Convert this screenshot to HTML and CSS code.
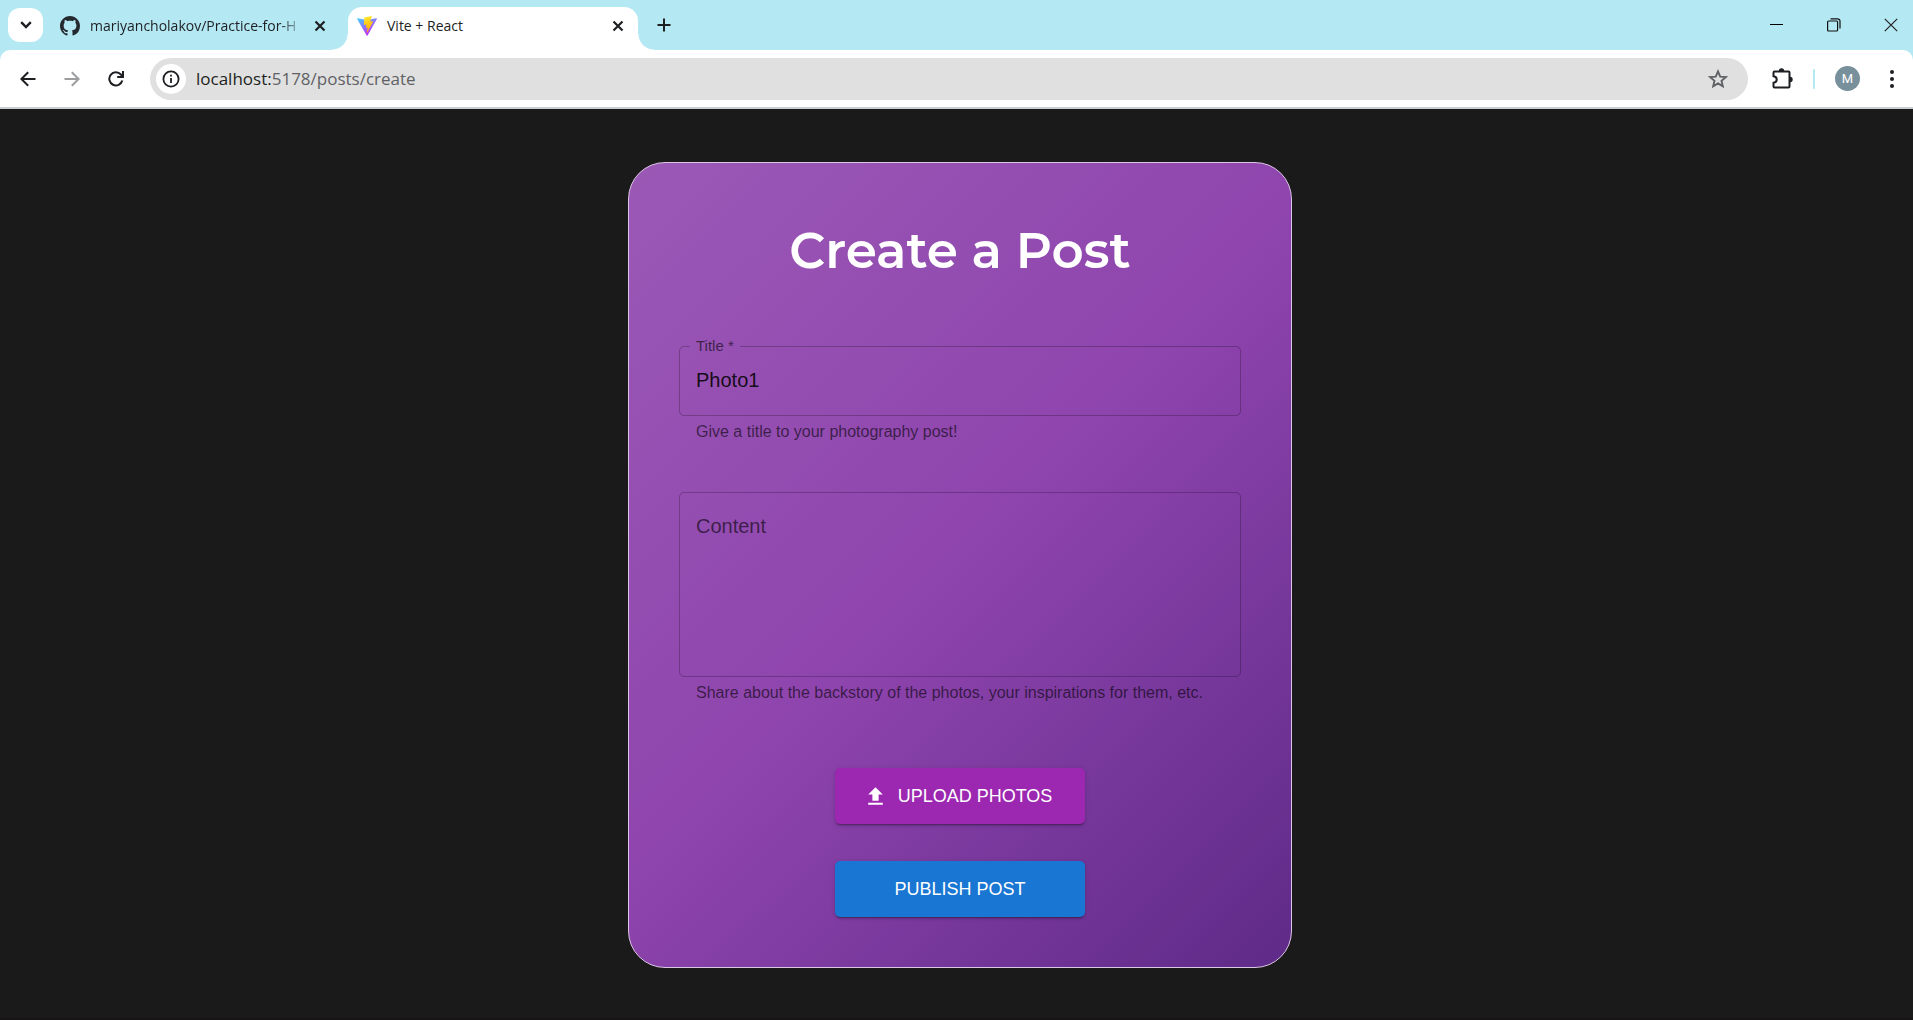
FILE: index.html
```html
<!DOCTYPE html>
<html lang="en">
<head>
  <meta charset="utf-8">
  <title>Vite + React</title>
  <link rel="stylesheet" href="styles.css">
</head>
<body>
  <header class="browser">
    <div class="tabstrip">
      <button class="tab-search" aria-label="Search tabs">
        <svg width="12" height="12" viewBox="0 0 12 12" fill="none" stroke="#1d1f22" stroke-width="2.4"><path d="M1.2 3.2 6 8l4.800-4.800"/></svg>
      </button>
      <div class="tab">
        <svg class="favicon" viewBox="0 0 16 16" fill="#24292f"><path d="M8 0C3.580 0 0 3.580 0 8c0 3.540 2.290 6.530 5.470 7.590.4.070.550-.170.550-.380 0-.190-.010-.820-.010-1.490-2.010.370-2.530-.490-2.690-.940-.090-.230-.480-.940-.820-1.130-.280-.150-.680-.520-.010-.530.630-.010 1.080.580 1.230.820.720 1.210 1.870.870 2.330.660.070-.520.280-.870.510-1.070-1.780-.200-3.640-.890-3.640-3.950 0-.870.310-1.590.820-2.150-.080-.200-.360-1.020.080-2.120 0 0 .670-.210 2.200.820.640-.180 1.320-.270 2-.270s1.360.090 2 .270c1.530-1.040 2.200-.820 2.200-.820.440 1.100.160 1.920.080 2.120.510.560.820 1.270.820 2.150 0 3.070-1.870 3.750-3.650 3.950.290.250.540.730.540 1.480 0 1.070-.010 1.930-.010 2.200 0 .210.150.460.550.380A8.010 8.010 0 0 0 16 8c0-4.420-3.580-8-8-8z"/></svg>
        <span class="tab-title faded">mariyancholakov/Practice-for-H</span>
        <button class="icon" aria-label="Close tab">
          <svg width="12" height="12" viewBox="0 0 12 12" stroke="#1d1f22" stroke-width="2.2"><path d="M1.500 1.500l9 9M10.500 1.500l-9 9"/></svg>
        </button>
      </div>
      <div class="tab active">
        <svg class="favicon" viewBox="0 0 32 32">
          <defs>
            <linearGradient id="vite-blue" x1="0" y1="0" x2=".6" y2="1"><stop offset="0" stop-color="#41d1ff"/><stop offset=".9" stop-color="#bd34fe"/></linearGradient>
            <linearGradient id="vite-bolt" x1=".4" y1="0" x2=".6" y2="1"><stop offset="0" stop-color="#ffea2e"/><stop offset="1" stop-color="#ff9f00"/></linearGradient>
          </defs>
          <path fill="url(#vite-blue)" d="M31.800 4.700 16.900 31.200c-.3.600-1.200.6-1.500 0L.2 4.700c-.3-.6.200-1.300.9-1.200l15 2.700 14.800-2.700c.7-.1 1.200.6.9 1.200z"/>
          <path fill="url(#vite-bolt)" d="M23 .1 12 2.200c-.2 0-.3.200-.4.400l-.6 11.300c0 .3.200.5.500.5l3-.7c.3-.1.600.2.500.5l-.9 4.400c-.1.300.2.600.5.500l1.900-.6c.3-.1.600.2.500.5l-1.400 7c-.1.400.5.700.7.300L25.800 9c.2-.3-.1-.7-.5-.6l-3.200.6c-.3.100-.6-.2-.5-.5L23.500.6c.1-.3-.2-.6-.5-.5z"/>
        </svg>
        <span class="tab-title">Vite + React</span>
        <button class="icon" aria-label="Close tab">
          <svg width="12" height="12" viewBox="0 0 12 12" stroke="#1d1f22" stroke-width="2.2"><path d="M1.500 1.500l9 9M10.500 1.500l-9 9"/></svg>
        </button>
      </div>
      <button class="icon new-tab" aria-label="New tab">
        <svg width="14" height="14" viewBox="0 0 14 14" stroke="#1d1f22" stroke-width="2"><path d="M7 .5v13M.5 7h13"/></svg>
      </button>
      <div class="window-controls">
        <button class="icon" aria-label="Minimize">
          <svg width="14" height="14" viewBox="0 0 14 14" stroke="#000" shape-rendering="crispEdges"><path d="M0 6.500h13"/></svg>
        </button>
        <button class="icon" aria-label="Restore">
          <svg width="14" height="14" viewBox="0 0 14 14" fill="none" stroke="#111" stroke-width="1.2"><rect x=".6" y="3" width="10" height="10" rx="1"/><path d="M3.500 .8h7a2.500 2.500 0 0 1 2.500 2.500v7.200"/></svg>
        </button>
        <button class="icon" aria-label="Close">
          <svg width="14" height="14" viewBox="0 0 14 14" stroke="#222" stroke-width="1.200"><path d="M.8.8l12.400 12.400M13.200.8.8 13.200"/></svg>
        </button>
      </div>
    </div>

    <div class="toolbar">
      <div class="navigation">
        <button class="icon" aria-label="Back">
          <svg width="16" height="16" viewBox="0 0 16 16" fill="none" stroke="#1d1f22" stroke-width="2"><path d="M15.500 8H1.800M8.200 1.200 1.400 8l6.800 6.800"/></svg>
        </button>
        <button class="icon" aria-label="Forward">
          <svg width="16" height="16" viewBox="0 0 16 16" fill="none" stroke="#9b9d9f" stroke-width="2"><path d="M.5 8h13.700M7.800 1.200 14.600 8l-6.800 6.800"/></svg>
        </button>
        <button class="icon" aria-label="Reload">
          <svg width="16" height="16" viewBox="0 0 16 16" fill="none" stroke="#1d1f22" stroke-width="2"><path d="M14.300 9.500A6.600 6.600 0 1 1 12.900 3.500l1.600 1.700"/><path d="M15 0v6H9.200"/></svg>
        </button>
      </div>
      <div class="address">
        <button class="site-info" aria-label="Site information">
          <svg width="18" height="18" viewBox="0 0 18 18" fill="none" stroke="#1d1f22"><circle cx="9" cy="9" r="7.600" stroke-width="1.800"/><path d="M9 8v5M9 4.800v1.800" stroke-width="1.800"/></svg>
        </button>
        <span class="url">localhost:<span class="path">5178/posts/create</span></span>
        <button class="icon" aria-label="Bookmark this page">
          <svg width="20" height="20" viewBox="0 0 20 20" fill="none" stroke="#5f6164" stroke-width="1.900"><path d="M10 2.400l2.200 5.200 5.600.5-4.300 3.700 1.300 5.500L10 14.400l-4.800 2.900 1.300-5.500L2.200 8.100l5.600-.5z"/></svg>
        </button>
      </div>
      <button class="icon" aria-label="Extensions">
        <svg width="22" height="22" viewBox="0 0 22 22" fill="none" stroke="#1d1f22" stroke-width="2"><path d="M3.500 3.500h14a1 1 0 0 1 1 1v14a1 1 0 0 1-1 1h-14a1 1 0 0 1-1-1v-3.700c4.300-.5 4.300-6.100 0-6.600V4.500a1 1 0 0 1 1-1z"/><path d="M7.800 3a2.700 2.700 0 0 1 5.400 0zM19 8.800a2.700 2.700 0 0 1 0 5.400z" fill="#1d1f22" stroke="none"/></svg>
      </button>
      <span class="divider"></span>
      <button class="avatar" aria-label="Profile">M</button>
      <button class="icon" aria-label="Menu">
        <svg width="6" height="20" viewBox="0 0 6 20" fill="#1d1f22"><circle cx="3" cy="3" r="2"/><circle cx="3" cy="10" r="2"/><circle cx="3" cy="17" r="2"/></svg>
      </button>
    </div>
  </header>

  <main class="page">
    <form class="card">
      <h1 class="heading">Create a Post</h1>

      <fieldset class="outline">
        <legend class="notch"><label for="title">Title *</label></legend>
        <input class="control" id="title" type="text" value="Photo1" aria-describedby="title-help">
      </fieldset>
      <p class="helper" id="title-help">Give a title to your photography post!</p>

      <div class="outline content">
        <label class="resting-label" for="content">Content</label>
        <textarea class="control" id="content" aria-describedby="content-help"></textarea>
      </div>
      <p class="helper" id="content-help">Share about the backstory of the photos, your inspirations for them, etc.</p>

      <div class="actions">
        <button class="button upload" type="button">
          <svg width="25" height="25" viewBox="0 0 24 24" fill="#fff"><path d="M5 20h14v-2H5zM5 10h4v6h6v-6h4l-7-7z"/></svg>
          Upload photos
        </button>
        <button class="button publish" type="submit">Publish post</button>
      </div>
    </form>
  </main>
</body>
</html>
```
FILE: styles.css
```css
* {
  box-sizing: border-box;
}

body {
  margin: 0;
  min-height: 100vh;
  display: flex;
  flex-direction: column;
  background: #1a1a1a;
  font-family: "Liberation Sans", Arial, sans-serif;
}

button {
  border: 0;
  padding: 0;
  background: none;
  font-family: inherit;
}

svg {
  display: block;
}

/* Browser frame */

.browser {
  background: #b4e8f3;
  border-bottom: 2px solid #c9cfd0;
  font-family: "Open Sans", "Noto Sans", sans-serif;
  color: #1d1f22;
}

.tabstrip {
  height: 50px;
  padding-left: 8px;
  display: flex;
  align-items: center;
}

.icon {
  flex: none;
  display: grid;
  place-items: center;
}

.tab-search {
  width: 35px;
  height: 34px;
  border-radius: 12px;
  background: #fff;
  display: grid;
  place-items: center;
}

.tab {
  width: 305px;
  height: 43px;
  padding: 0 22px 6px 17px;
  display: flex;
  align-items: center;
  gap: 10px;
  align-self: flex-end;
}

.tab.active {
  position: relative;
  width: 290px;
  padding-left: 9px;
  padding-right: 14px;
  border-radius: 14px 14px 0 0;
  background: #fff;
}

.tab.active::before,
.tab.active::after {
  content: "";
  position: absolute;
  bottom: 0;
  width: 16px;
  height: 16px;
}

.tab.active::before {
  right: 100%;
  background: radial-gradient(circle at 0 0, transparent 15px, #fff 16px);
}

.tab.active::after {
  left: 100%;
  background: radial-gradient(circle at 100% 0, transparent 15px, #fff 16px);
}

.favicon {
  flex: none;
  width: 20px;
  height: 20px;
}

.tab-title {
  flex: 1;
  white-space: nowrap;
  font-size: 14px;
  line-height: 20px;
}

.faded {
  -webkit-mask-image: linear-gradient(to left, transparent, #000 24px);
  mask-image: linear-gradient(to left, transparent, #000 24px);
}

.new-tab {
  margin-left: 19px;
}

.window-controls {
  margin-left: auto;
  padding-right: 15px;
  display: flex;
  gap: 43px;
}

.toolbar {
  height: 57px;
  padding: 0 18px 0 20px;
  display: flex;
  align-items: center;
  border-radius: 10px 10px 0 0;
  background: #fff;
}

.navigation {
  display: flex;
  gap: 28px;
  margin-right: 26px;
}

.address {
  flex: 1;
  height: 42px;
  margin-right: 23px;
  padding: 0 20px 0 6px;
  display: flex;
  align-items: center;
  border-radius: 21px;
  background: #e0e0e0;
}

.site-info {
  width: 30px;
  height: 30px;
  border-radius: 50%;
  background: #fff;
  display: grid;
  place-items: center;
}

.url {
  flex: 1;
  padding-left: 10px;
  font-size: 17px;
  line-height: 24px;
}

.path {
  color: #5f6164;
}

.divider {
  width: 2px;
  height: 20px;
  margin: 0 20px;
  border-radius: 1px;
  background: #b4e8f3;
}

.avatar {
  width: 25px;
  height: 25px;
  margin-right: 29px;
  border-radius: 50%;
  background: #78909c;
  color: #fff;
  font-family: Roboto, sans-serif;
  font-size: 13px;
  line-height: 25px;
}

/* Page */

.page {
  flex: 1;
  padding: 53px 0 50px 7px;
  border-bottom: 2px solid #161414;
}

.card {
  max-width: 664px;
  margin: 0 auto;
  padding: 50px;
  border: 1px solid #dcc6e6;
  border-radius: 37px;
  background: linear-gradient(135deg, #9b59b6, #8e44ad, #5e2a88) border-box;
}

.heading {
  margin: 0 0 48px;
  color: #fff;
  font-family: Montserrat, Inter, sans-serif;
  font-size: 50px;
  font-weight: 600;
  line-height: 76px;
  text-align: center;
}

.outline {
  min-width: 0;
  margin: 0;
  padding: 0 10px;
  border: 1px solid rgba(0, 0, 0, 0.23);
  border-radius: 5px;
}

.notch {
  padding: 0 6px;
  color: rgba(0, 0, 0, 0.6);
  font-size: 15px;
  line-height: 18px;
}

.control {
  display: block;
  width: 100%;
  border: 0;
  outline: 0;
  background: none;
  color: rgba(0, 0, 0, 0.87);
  font-family: inherit;
  font-size: 20px;
  line-height: 28px;
}

input.control {
  height: 60px;
  padding: 0 6px 10px;
}

.content {
  display: grid;
}

.content > * {
  grid-area: 1 / 1;
}

.resting-label {
  padding: 19px 6px;
  color: rgba(0, 0, 0, 0.6);
  font-size: 20px;
  line-height: 28px;
  pointer-events: none;
}

textarea.control {
  height: 183px;
  padding: 19px 6px;
  resize: none;
}

.helper {
  margin: 5px 17px 49px;
  color: rgba(0, 0, 0, 0.6);
  font-size: 16px;
  line-height: 22px;
}

.actions {
  margin-top: 64px;
  display: flex;
  flex-direction: column;
  align-items: center;
  gap: 37px;
}

.helper:has(+ .actions) {
  margin-bottom: 0;
}

.button {
  width: 250px;
  height: 56px;
  display: flex;
  align-items: center;
  justify-content: center;
  gap: 10px;
  border-radius: 5px;
  color: #fff;
  font-size: 18px;
  font-weight: 500;
  text-transform: uppercase;
  box-shadow: 0 3px 1px -2px rgba(0, 0, 0, 0.2), 0 2px 2px rgba(0, 0, 0, 0.14), 0 1px 5px rgba(0, 0, 0, 0.12);
}

.upload {
  padding-right: 5px;
  background: #9c27b0;
}

.publish {
  background: #1976d2;
}
```
